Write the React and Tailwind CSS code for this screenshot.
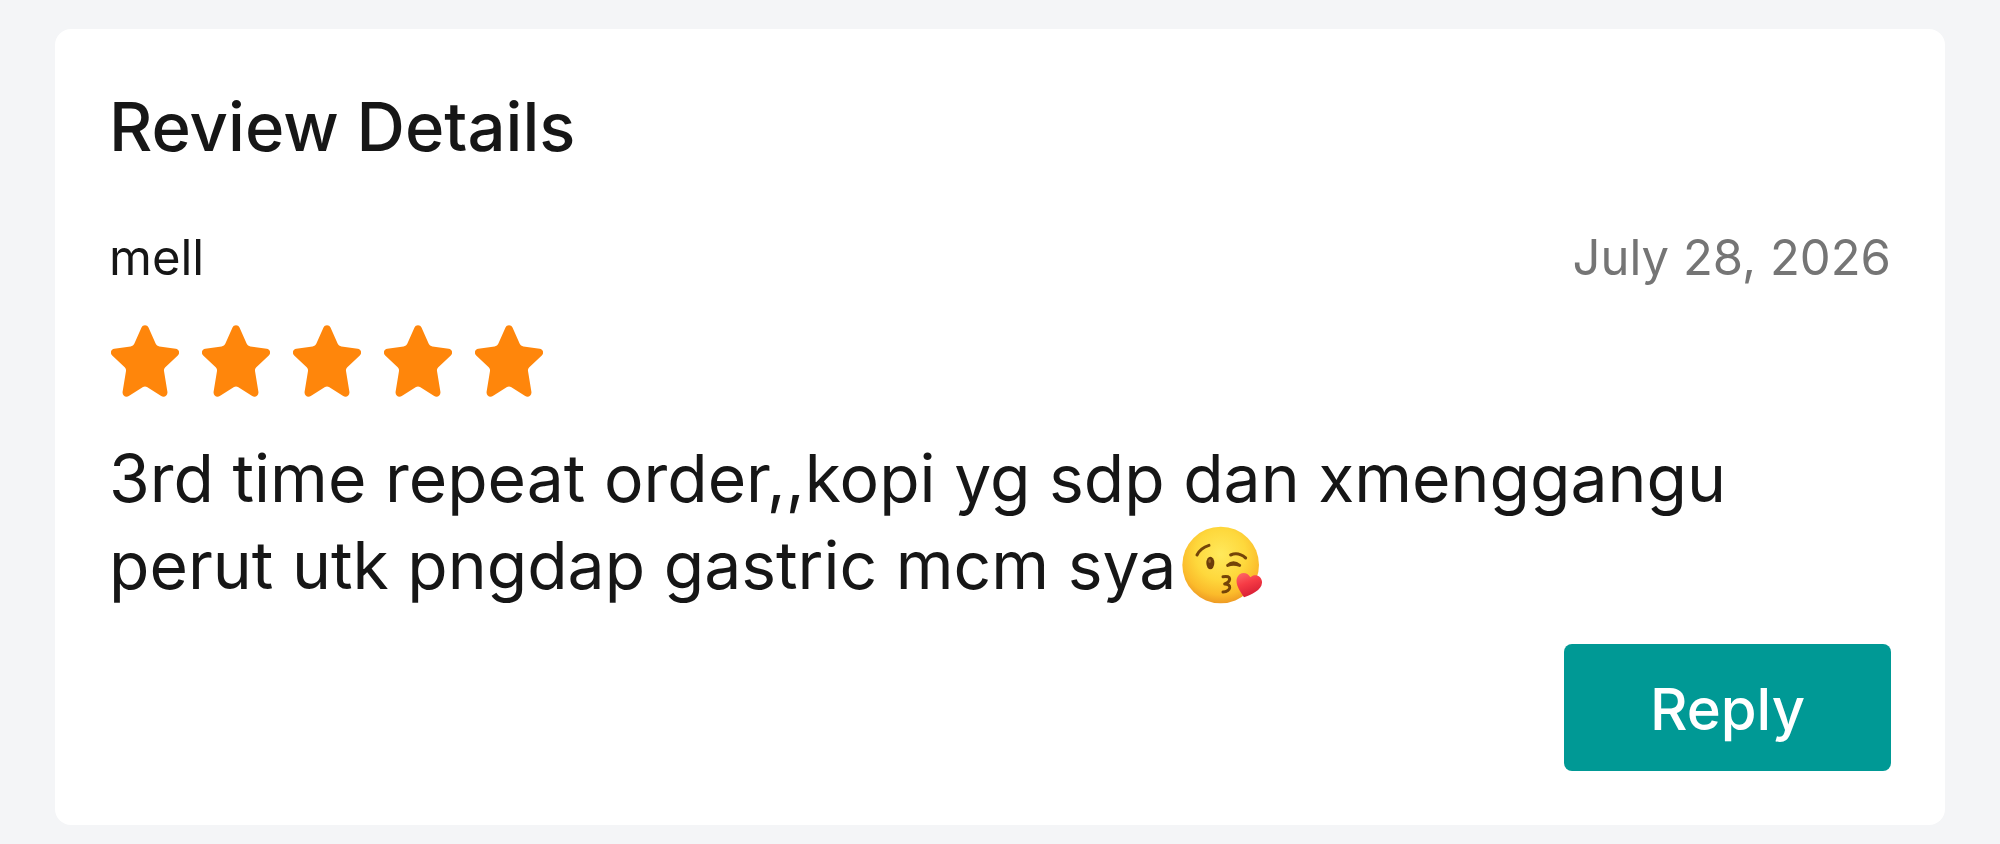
import React, { useState } from 'react';

const review = {
  author: 'mell',
  date: 'July 28, 2026',
  rating: 5,
  text: '3rd time repeat order,,kopi yg sdp dan xmenggangu perut utk pngdap gastric mcm sya',
};

function Star() {
  return (
    <svg viewBox="0 0 68 72" className="w-[68px] h-[72px]" aria-hidden="true">
      <path
        fill="#ff860b"
        d="M30.5 2.6C31.8-.6 36.2-.6 37.5 2.6L44.6 18.6C45.2 20.2 46.7 21.3 48.4 21.4L64.7 23.7C68.1 24.1 69.3 28.2 66.8 30.5L54.3 42.2C53.3 43.1 52.8 44.6 53 46L56.4 66.8C56.9 70.5 53.3 73.1 50.2 71.1L36 62.1C34.8 61.3 33.2 61.3 32 62.1L17.8 71.1C14.7 73.1 11.1 70.5 11.6 66.8L15 46C15.2 44.6 14.7 43.1 13.7 42.2L1.2 30.5C-1.3 28.2-.1 24.1 3.3 23.7L19.6 21.4C21.3 21.3 22.8 20.2 23.4 18.6Z"
      />
    </svg>
  );
}

function KissEmoji() {
  return (
    <svg
      viewBox="0 0 240 232"
      role="img"
      aria-label="Face blowing a kiss"
      className="inline-block w-[80px] h-[78px] ml-1.5 align-[-15px]"
    >
      <defs>
        <radialGradient id="face" cx="0.5" cy="0.36" r="0.66">
          <stop offset="0" stopColor="#ffe95c" />
          <stop offset="0.5" stopColor="#fed83c" />
          <stop offset="0.8" stopColor="#fbbb2b" />
          <stop offset="1" stopColor="#ec9522" />
        </radialGradient>
        <linearGradient id="heart" x1="0" y1="0" x2="0.4" y2="1">
          <stop offset="0" stopColor="#ff6d6b" />
          <stop offset="0.5" stopColor="#f63b45" />
          <stop offset="1" stopColor="#d81f35" />
        </linearGradient>
      </defs>
      <circle cx="116" cy="116" r="115" fill="url(#face)" />
      <ellipse cx="85" cy="110" rx="12" ry="19" fill="#6b3c0a" />
      <ellipse cx="83" cy="104" rx="4" ry="6" fill="#9a6520" />
      <g fill="none" stroke="#744408" strokeWidth="9" strokeLinecap="round" strokeLinejoin="round">
        <path d="M45 86Q55 65 81 57" />
        <path d="M146 86Q169 76 191 95" />
        <path d="M137 117Q154 102 173 117M137 117Q154 110 173 117" />
        <path d="M123 151Q143 148 143 158Q142 168 128 173Q144 174 143 184Q141 195 123 197" />
      </g>
      <path
        fill="url(#heart)"
        d="M186 213C178 200 158 176 165 155C171 136 196 134 205 153C219 139 241 150 240 169C239 192 208 204 186 213Z"
      />
    </svg>
  );
}

export default function App() {
  const [replied, setReplied] = useState(false);

  return (
    <main className="min-h-screen bg-[#f4f5f7] px-[55px] pt-[29px] pb-[19px] font-['Inter',sans-serif] text-[#161616]">
      <section className="bg-white rounded-2xl px-[54px] pt-[51px] pb-[54px]">
        <h1 className="text-[67px] leading-[94px] font-medium">Review Details</h1>
        <div className="mt-[52px] flex items-center justify-between text-[49px] leading-[64px]">
          <span>{review.author}</span>
          <time dateTime="2026-07-28" className="text-[#757575]">{review.date}</time>
        </div>
        <div className="mt-[35px] ml-[2px] flex gap-[23px]" role="img" aria-label={`${review.rating} out of 5 stars`}>
          {Array.from({ length: review.rating }, (_, i) => (
            <Star key={i} />
          ))}
        </div>
        <p className="mt-[38px] text-[66px] leading-[87px]">
          {review.text}
          <KissEmoji />
        </p>
        <div className="mt-[35px] flex justify-end">
          <button
            type="button"
            onClick={() => setReplied(!replied)}
            className="bg-[#009995] rounded-lg px-[86px] pt-[22px] pb-[18px] text-[58px] leading-[87px] font-medium text-white"
          >
            Reply
          </button>
        </div>
      </section>
    </main>
  );
}
